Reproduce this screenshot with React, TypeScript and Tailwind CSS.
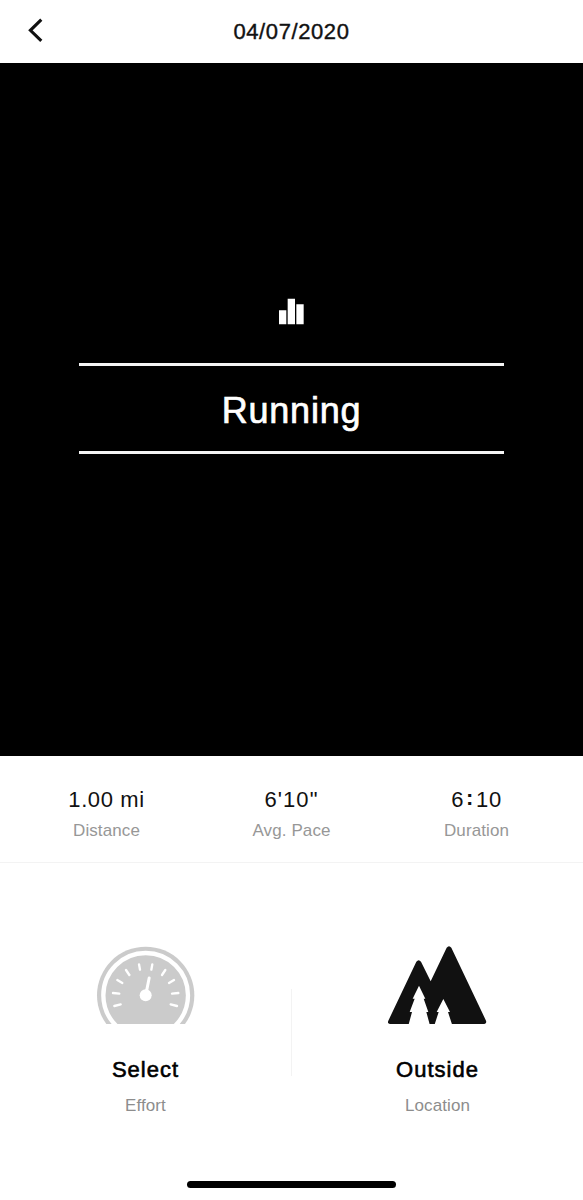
import React from 'react';

interface StatProps {
  label: string;
  children: React.ReactNode;
}

interface DetailProps {
  icon: React.ReactNode;
  title: string;
  label: string;
}

// Gauge ticks as [x1, y1, x2, y2], fanned around the needle
const TICKS = [
  [88, 213, 107, 208],
  [84, 174, 103, 176],
  [97, 135, 112, 144],
  [123, 105, 133, 120],
  [162, 88, 165, 104],
  [202, 88, 199, 104],
  [241, 105, 231, 120],
  [267, 135, 252, 144],
  [280, 174, 261, 176],
  [276, 213, 257, 208],
];

const BackIcon = () => (
  <svg width="18" height="26" viewBox="0 0 18 26" fill="none">
    <path d="M14.300 2.700 3.400 13.300 14.300 23.900" stroke="#111" strokeWidth="3.100" />
  </svg>
);

const BarsIcon = () => (
  <svg width="26" height="27" viewBox="0 0 78 81" fill="#fff">
    <path d="M0 37h22v42H0zM26 2h22v77H26zM52 19h22v60H52z" />
  </svg>
);

const GaugeIcon = () => (
  <svg width="100" height="78" viewBox="33 33 300 234" fill="none">
    <circle cx="182" cy="181" r="146" fill="#cbcbcb" />
    <circle cx="182" cy="181" r="127" stroke="#fff" strokeWidth="13" />
    <g stroke="#fff" strokeWidth="7" strokeLinecap="round">
      {TICKS.map(([x1, y1, x2, y2]) => (
        <line key={`${x1}-${y1}`} x1={x1} y1={y1} x2={x2} y2={y2} />
      ))}
    </g>
    <path d="M182 181 192.500 129" stroke="#fff" strokeWidth="9" strokeLinecap="round" />
    <circle cx="182" cy="181" r="18" fill="#fff" />
  </svg>
);

const MountainsIcon = () => (
  <svg width="100" height="78" viewBox="24 33 300 234">
    <path
      d="M30 267Q21 266 25 257L109 80Q116 71 123 80L152 139L200 38Q207 29 214 38L318 257Q321 266 313 267Z"
      fill="#111"
    />
    <path d="M117 152 136 191H131L145 231H139L149 268H86L96 231H89L104 191H98Z" fill="#fff" />
    <path d="M190 192 210 231H204L216 268H164L176 231H170Z" fill="#fff" />
  </svg>
);

const Stat = ({ label, children }: StatProps) => (
  <div className="flex flex-col items-center">
    <div className="text-[22px] leading-7 tracking-[0.6px] text-[#111]">{children}</div>
    <div className="mt-[5px] text-[17px] leading-6 tracking-[0.1px] text-[#979797]">{label}</div>
  </div>
);

const Detail = ({ icon, title, label }: DetailProps) => (
  <div className="flex flex-1 flex-col items-center">
    {icon}
    <div className="mt-8 text-[22px] leading-7 tracking-[1px] text-black [-webkit-text-stroke:0.6px_black]">
      {title}
    </div>
    <div className="mt-[10px] text-[17px] leading-6 tracking-[0.1px] text-[#8d8d8d]">{label}</div>
  </div>
);

export default function App() {
  return (
    <div className="flex h-[1200px] w-full flex-col bg-white font-['Liberation_Sans',Arial,sans-serif]">
      <header className="grid h-[63px] shrink-0 grid-cols-[1fr_auto_1fr] items-center">
        <button aria-label="Back" className="ml-[27px] -mt-[3px] w-fit">
          <BackIcon />
        </button>
        <h1 className="text-[22px] leading-7 tracking-[0.6px] text-[#111] [-webkit-text-stroke:0.4px_#111]">
          04/07/2020
        </h1>
      </header>

      <section className="flex h-[693px] shrink-0 flex-col items-center bg-black pt-[235px]">
        <BarsIcon />
        <div className="mt-[38px] flex h-[91px] w-[425px] items-center justify-center border-y-3 border-[#f4f4f4] pt-[5px]">
          <h2 className="text-[36px] leading-10 tracking-[0.8px] text-white [-webkit-text-stroke:0.7px_white]">
            Running
          </h2>
        </div>
      </section>

      <section className="grid h-[107px] shrink-0 grid-cols-3 border-b border-[#f3f3f3] px-[14px] pt-[30px]">
        <Stat label="Distance">1.00 mi</Stat>
        <Stat label="Avg. Pace">
          <span className="tracking-[1.1px]">6'10"</span>
        </Stat>
        <Stat label="Duration">
          6<span className="relative -top-[2px] mx-[2px] font-bold">:</span>10
        </Stat>
      </section>

      <section className="flex h-[318px] shrink-0 pt-[83px]">
        <Detail icon={<GaugeIcon />} title="Select" label="Effort" />
        <div className="mt-[43px] h-[87px] w-px bg-[#f3f3f3]" />
        <Detail icon={<MountainsIcon />} title="Outside" label="Location" />
      </section>

      <div className="mx-auto h-[7px] w-[209px] rounded-full bg-black" />
    </div>
  );
}
